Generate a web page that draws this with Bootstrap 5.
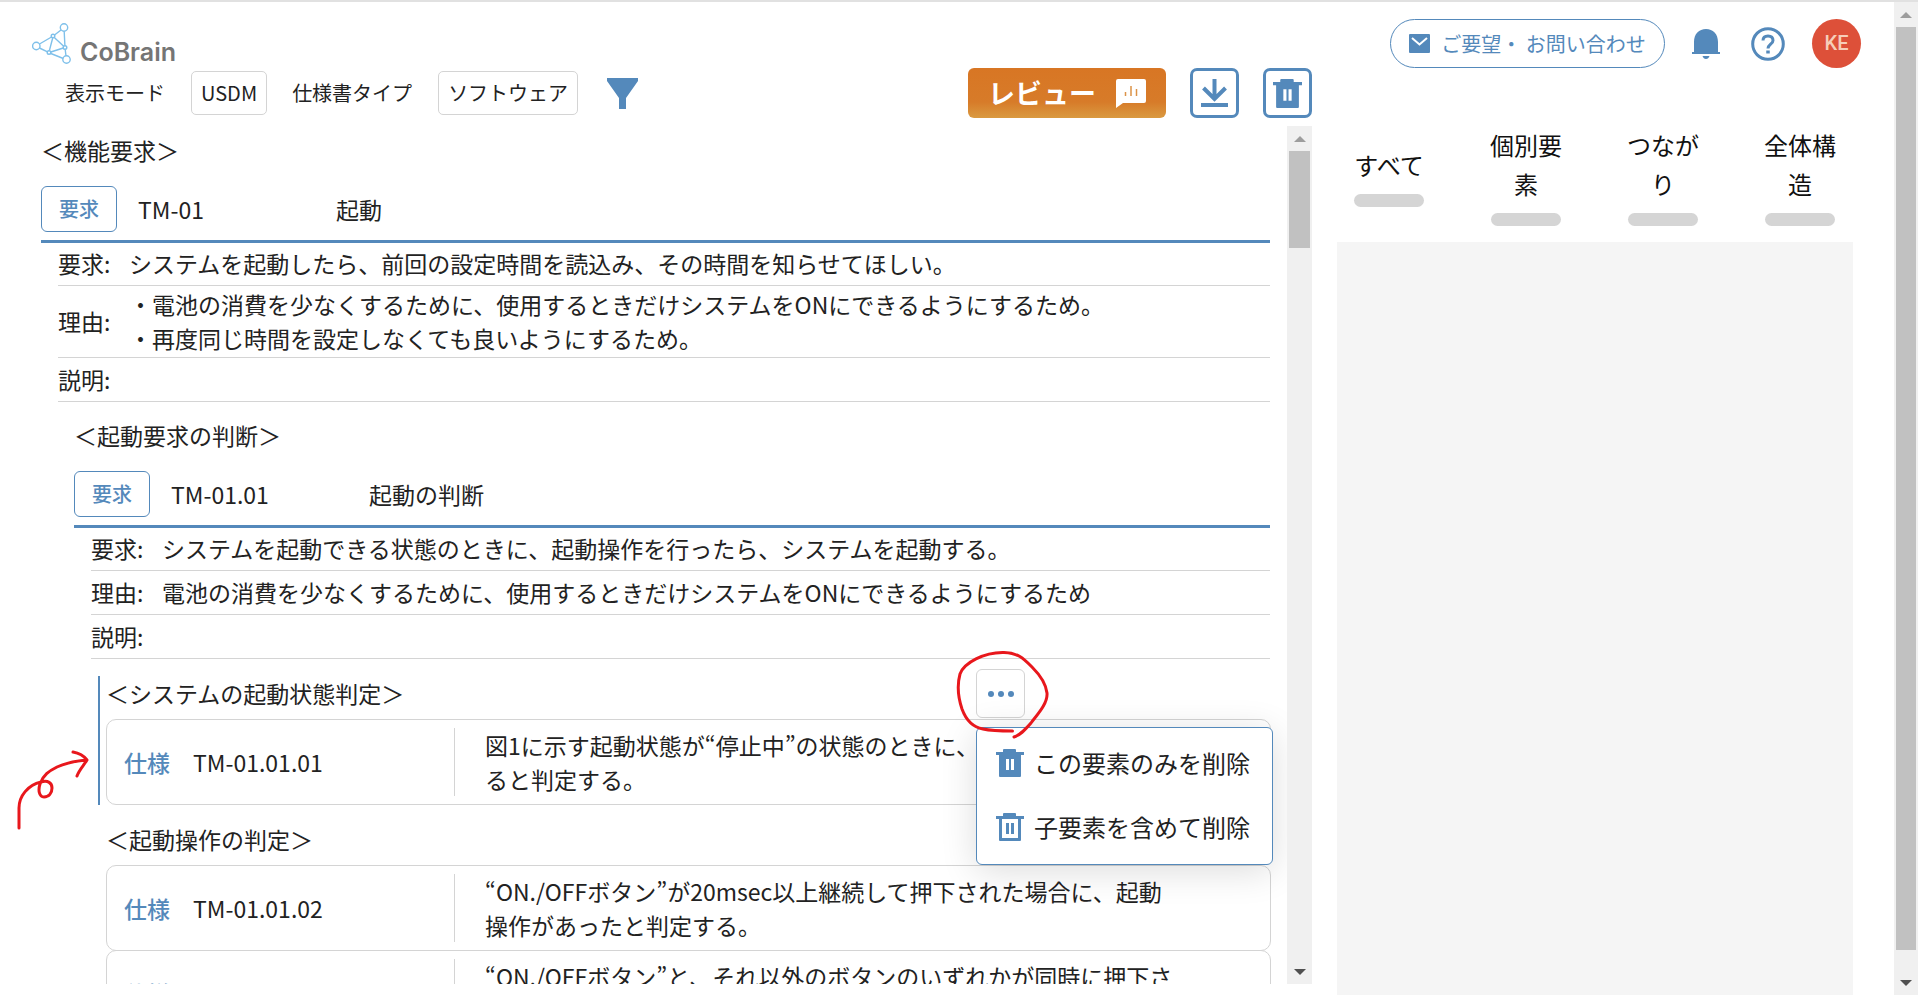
<!DOCTYPE html>
<html lang="ja">
<head>
<meta charset="utf-8">
<meta name="viewport" content="width=device-width, initial-scale=1">
<title>CoBrain</title>
<link href="https://cdn.jsdelivr.net/npm/bootstrap@5.3.0/dist/css/bootstrap.min.css" rel="stylesheet">
<style>
:root{--blue:#5489bb;--rule:#d4d4d4}
body{font-family:"Noto Sans CJK JP",sans-serif;color:#222;font-size:23px;line-height:34px;background:#fff}
.app{height:100vh;border-top:2px solid #e1e1e1}
.blue{color:var(--blue)}
svg{display:block;flex:none}
/* left side */
.brand{height:66px;padding:21px 0 0 32px;color:#757575;text-decoration:none}
.brand-name{font-family:Inter,sans-serif;font-weight:600;font-size:25px;line-height:24px;margin:17px 0 0 9px}
.tools{height:50px;padding-left:65px;font-size:20px;margin-bottom:8px}
.pick{background:#fff;border:1px solid var(--rule);border-radius:5px;height:44px;padding:0 9px;color:#222;margin-left:26px}
.pick-label{margin-left:25px}
.filter{margin-left:29px}
.plain{background:none;border:0;padding:0;color:var(--blue)}
.review{width:198px;height:50px;border:0;border-radius:6px;color:#fff;font-weight:700;font-size:27px;background:linear-gradient(#d87624 0,#d77b29 68%,#da9a41 100%);padding:0 20px 0 20px}
.square{width:49px;height:50px;border:3px solid var(--blue);border-radius:7px;background:#fff;color:var(--blue);padding:0;margin-left:24px}
.doc{padding:7px 17px 0 41px}
.caption{font-size:23px;line-height:34px;font-weight:400;margin:0}
.block>.caption{margin-bottom:19px}
.block .block{margin:16px 0 0 33px}
.req-head{border-bottom:3px solid var(--blue);padding-bottom:8px}
.tag-req{width:76px;height:46px;border:1px solid var(--blue);border-radius:6px;font-size:20px;font-weight:500;background:#fff}
.req-id{width:198px;margin-left:21px}
.facts{margin:0 0 0 17px}
.fact{min-height:44px;padding-bottom:2px;border-bottom:1px solid var(--rule)}
.fact:first-child{min-height:43px}
.fact.tall{min-height:72px}
.fact dt{width:71px;font-weight:400}
.fact dd{margin:0}
.group{border-left:2px solid transparent;padding-left:6px;margin:17px -1px 0 24px}
.group.on{border-color:var(--blue)}
.group .caption{margin-bottom:9px}
.spec{border:1px solid var(--rule);border-radius:10px;padding:8px 0;background:#fff}
.spec + .spec{margin-top:-1px}
.spec-key{width:348px;padding-left:17px;border-right:1px solid var(--rule);gap:23px}
.spec-key b{font-weight:500}
.spec p{margin:0;padding-left:30px}
.more{right:246px;top:-7px;width:49px;height:49px;border:1px solid var(--rule);border-radius:6px;background:#fff;padding:0;color:var(--blue)}
.pop{right:-2px;top:51px;width:297px;padding:4px 0 4px 19px;background:#fff;border:1px solid var(--blue);border-radius:6px;box-shadow:0 6px 36px rgba(0,0,0,.14);z-index:2}
.pop button{height:64px;font-size:24px;color:#222;gap:10px;padding-bottom:2px}
.ink{z-index:3;pointer-events:none;overflow:visible;fill:none;stroke:#e8171c;stroke-width:3;stroke-linecap:round;stroke-linejoin:round}
.ink-loop{right:217px;top:-31px}
.ink-arrow{left:-86px;top:69px}
/* scroll rails */
.rail{width:25px;background:#f0f0f0;padding:0 2px}
.rail.outer{width:24px}
.rail i{display:block;height:25px;flex:none}
.rail i::before{content:"";display:block;margin:10px auto 0;width:11px;border:solid transparent;border-width:0 6px 6px;border-bottom-color:#9d9d9d}
.rail i.down::before{border-width:6px 6px 0;border-top-color:#505050}
.thumb{background:#c1c1c1}
.main{min-height:0;margin-bottom:11px}
/* right side */
.side{flex:0 0 524px;margin:0 33px 0 25px}
.account{padding-top:17px}
.contact{border:1px solid var(--blue);border-radius:25px;height:49px;width:275px;font-size:20px;color:var(--blue);background:#fff;padding:0;gap:11px}
.face{width:49px;height:49px;border-radius:50%;background:#dd5039;color:#f6cdb9;font:500 20px/49px Roboto,sans-serif;border:0;padding:0}
.tabs4{margin:57px 0 16px;padding-left:16px;gap:65px;font-size:24px;line-height:39px}
.tabs4 button{width:72px;background:none;border:0;padding:0;color:#111;word-break:break-all}
.tabs4 span{display:block;height:13px;border-radius:7px;background:#d5d5d5;margin:10px 1px 0}
.result{background:#f5f5f5;margin-right:8px}
</style>
</head>
<body>
<svg width="0" height="0" class="position-absolute" aria-hidden="true">
  <symbol id="bin" viewBox="0 0 28 28"><path fill="currentColor" fill-rule="evenodd" d="M0 3h7V1q0-1 1-1h11q1 0 1 1v2h8v3h-3v21q0 1-1 1H4q-1 0-1-1V6H0zM10 10v11h3V10zm5 0v11h3V10z"/></symbol>
  <symbol id="bin-open" viewBox="0 0 28 28"><path fill="currentColor" fill-rule="evenodd" d="M0 3h7V1q0-1 1-1h11q1 0 1 1v2h8v3h-3v21q0 1-1 1H4q-1 0-1-1V6H0zM6 6v19h16V6zM10 10h3v11h-3zm5 0h3v11h-3z"/></symbol>
</svg>
<div class="app d-flex overflow-hidden">
  <div class="d-flex flex-column flex-grow-1">
    <a href="#" class="brand d-flex flex-shrink-0">
      <svg width="39" height="41" viewBox="0 0 39 41" fill="none" stroke="#7fc0ea" stroke-width="1.4"><circle cx="32" cy="4.500" r="3.700"/><circle cx="4.300" cy="23" r="3.700"/><circle cx="34.500" cy="36.500" r="3.700"/><circle cx="21" cy="13" r="1.800"/><circle cx="33" cy="24.500" r="1.800"/><circle cx="17" cy="29.500" r="1.800"/><path d="M29 7l-6.500 5M19.500 14L7.500 21M32.200 8.500l.7 14M33.200 26.500l.8 6.500M7.500 25l8 3.800M18.800 30.500l12.500 5M20.700 15L17.400 27.500M22.300 14.500l9.400 8.800M18.800 29l12.500-4"/></svg>
      <span class="brand-name">CoBrain</span>
    </a>
    <div class="tools d-flex align-items-center flex-shrink-0">
      <span>表示モード</span>
      <button type="button" class="pick">USDM</button>
      <span class="pick-label">仕様書タイプ</span>
      <button type="button" class="pick">ソフトウェア</button>
      <button type="button" class="plain filter" aria-label="フィルター"><svg width="31" height="31" viewBox="0 0 31 31"><path fill="currentColor" d="M0 0h31v3L19 20v11h-7V20L0 3z"/></svg></button>
      <button type="button" class="review ms-auto d-flex align-items-center justify-content-between">レビュー
        <svg width="30" height="29" viewBox="0 0 30 29"><path fill="#fff" d="M2 0h26q2 0 2 2v20q0 2-2 2H7l-7 5V2q0-2 2-2z"/><path stroke="#dc9247" stroke-width="1.500" d="M9.500 13v4M15 7v10M20.500 10v7"/></svg></button>
      <button type="button" class="square d-flex align-items-center justify-content-center" aria-label="ダウンロード"><svg width="27" height="28" viewBox="0 0 27 28" fill="none" stroke="currentColor" stroke-width="4"><path d="M13.500 0v19M2.500 9l11 11 11-11M0 26h27"/></svg></button>
      <button type="button" class="square d-flex align-items-center justify-content-center" aria-label="削除"><svg width="29" height="29"><use href="#bin"/></svg></button>
    </div>
    <div class="main d-flex flex-grow-1">
      <main class="doc flex-grow-1 overflow-hidden">
        <section class="block">
          <h2 class="caption">＜機能要求＞</h2>
          <div class="req-head d-flex align-items-center">
            <span class="tag-req blue d-flex align-items-center justify-content-center">要求</span>
            <span class="req-id">TM-01</span><span>起動</span>
          </div>
          <dl class="facts">
            <div class="fact d-flex align-items-center"><dt>要求:</dt><dd>システムを起動したら、前回の設定時間を読込み、その時間を知らせてほしい。</dd></div>
            <div class="fact tall d-flex align-items-center"><dt>理由:</dt><dd>・電池の消費を少なくするために、使用するときだけシステムをONにできるようにするため。<br>・再度同じ時間を設定しなくても良いようにするため。</dd></div>
            <div class="fact d-flex align-items-center"><dt>説明:</dt><dd></dd></div>
          </dl>
          <section class="block">
            <h3 class="caption">＜起動要求の判断＞</h3>
            <div class="req-head d-flex align-items-center">
              <span class="tag-req blue d-flex align-items-center justify-content-center">要求</span>
              <span class="req-id">TM-01.01</span><span>起動の判断</span>
            </div>
            <dl class="facts">
              <div class="fact d-flex align-items-center"><dt>要求:</dt><dd>システムを起動できる状態のときに、起動操作を行ったら、システムを起動する。</dd></div>
              <div class="fact d-flex align-items-center"><dt>理由:</dt><dd>電池の消費を少なくするために、使用するときだけシステムをONにできるようにするため</dd></div>
              <div class="fact d-flex align-items-center"><dt>説明:</dt><dd></dd></div>
            </dl>
            <div class="group on position-relative">
              <h4 class="caption">＜システムの起動状態判定＞</h4>
              <div class="spec d-flex">
                <div class="spec-key d-flex align-items-center"><b class="blue">仕様</b><span>TM-01.01.01</span></div>
                <p>図1に示す起動状態が“停止中”の状態のときに、<br>ると判定する。</p>
              </div>
              <button type="button" class="more position-absolute d-flex align-items-center justify-content-center" aria-label="メニュー"><svg width="26" height="6" fill="currentColor"><circle cx="3" cy="3" r="3"/><circle cx="13" cy="3" r="3"/><circle cx="23" cy="3" r="3"/></svg></button>
              <div class="pop position-absolute">
                <button type="button" class="plain d-flex align-items-center"><svg width="28" height="28" class="blue"><use href="#bin"/></svg>この要素のみを削除</button>
                <button type="button" class="plain d-flex align-items-center"><svg width="28" height="28" class="blue"><use href="#bin-open"/></svg>子要素を含めて削除</button>
              </div>
              <svg class="ink ink-loop position-absolute" width="104" height="100" viewBox="950 645 104 100"><path d="M1012.500 731C1000 731 992 731 983 729C972 727 966 720 962 709C958 697 957 685 960 674C964 663 984 652 1004 652.500C1018 653 1023 658 1032 667C1040 675 1046 684 1047 693C1048 704 1036 716 1031 723C1024 731 1020 735 1014 737"/></svg>
              <svg class="ink ink-arrow position-absolute" width="76" height="86" viewBox="14 745 76 86"><path d="M19 828V808C19 796 28 785 41 782C48 780 52 783 52 788C52 793 49 797 44 797C39 797 38 790 40 784C43 775 49 771 57 767C66 763 76 761 86 760M73 752C79 753 84 756 87 760C84 765 79 770 77 776"/></svg>
            </div>
            <div class="group">
              <h4 class="caption">＜起動操作の判定＞</h4>
              <div class="spec d-flex">
                <div class="spec-key d-flex align-items-center"><b class="blue">仕様</b><span>TM-01.01.02</span></div>
                <p>“ON./OFFボタン”が20msec以上継続して押下された場合に、起動<br>操作があったと判定する。</p>
              </div>
              <div class="spec d-flex">
                <div class="spec-key d-flex align-items-center"><b class="blue">仕様</b></div>
                <p>“ON./OFFボタン”と、それ以外のボタンのいずれかが同時に押下さ<br>&nbsp;</p>
              </div>
            </div>
          </section>
        </section>
      </main>
      <div class="rail d-flex flex-column flex-shrink-0" aria-hidden="true"><i></i><div class="thumb" style="height:97px"></div><i class="down mt-auto"></i></div>
    </div>
  </div>
  <aside class="side d-flex flex-column">
    <div class="account d-flex align-items-center justify-content-end">
      <button type="button" class="contact d-flex align-items-center justify-content-center"><svg width="21" height="19" viewBox="0 0 21 19"><rect width="21" height="19" rx="1" fill="currentColor"/><path d="M3 4l7.500 6.500L18 4" fill="none" stroke="#fff" stroke-width="2"/></svg>ご要望・ お問い合わせ</button>
      <button type="button" class="plain" style="margin-left:27px" aria-label="通知"><svg width="28" height="30" viewBox="0 0 28 30" fill="currentColor"><path d="M2 23V13C2 5 7 0 14 0s12 5 12 13v10h2v2H0v-2zM10.500 27h7q-1 3-3.500 3t-3.500-3z"/></svg></button>
      <button type="button" class="plain" style="margin-left:31px" aria-label="ヘルプ"><svg width="34" height="34" viewBox="0 0 34 34" fill="none" stroke="currentColor"><circle cx="17" cy="17" r="15.300" stroke-width="3"/><path stroke-width="3" d="M12 13.500C12 10.500 14 9 17 9s5 1.700 5 4.500c0 3.500-5 4-5 8"/><path stroke-width="3.500" d="M17 23.500v3"/></svg></button>
      <button type="button" class="face" style="margin-left:27px">KE</button>
    </div>
    <div class="tabs4 d-flex align-items-center">
      <button type="button">すべて<span></span></button>
      <button type="button">個別要素<span></span></button>
      <button type="button">つながり<span></span></button>
      <button type="button">全体構造<span></span></button>
    </div>
    <div class="result flex-grow-1"></div>
  </aside>
  <div class="rail outer d-flex flex-column flex-shrink-0" aria-hidden="true"><i></i><div class="thumb" style="height:93%"></div><i class="down mt-auto"></i></div>
</div>
<script src="https://cdn.jsdelivr.net/npm/bootstrap@5.3.0/dist/js/bootstrap.bundle.min.js"></script>
</body>
</html>
